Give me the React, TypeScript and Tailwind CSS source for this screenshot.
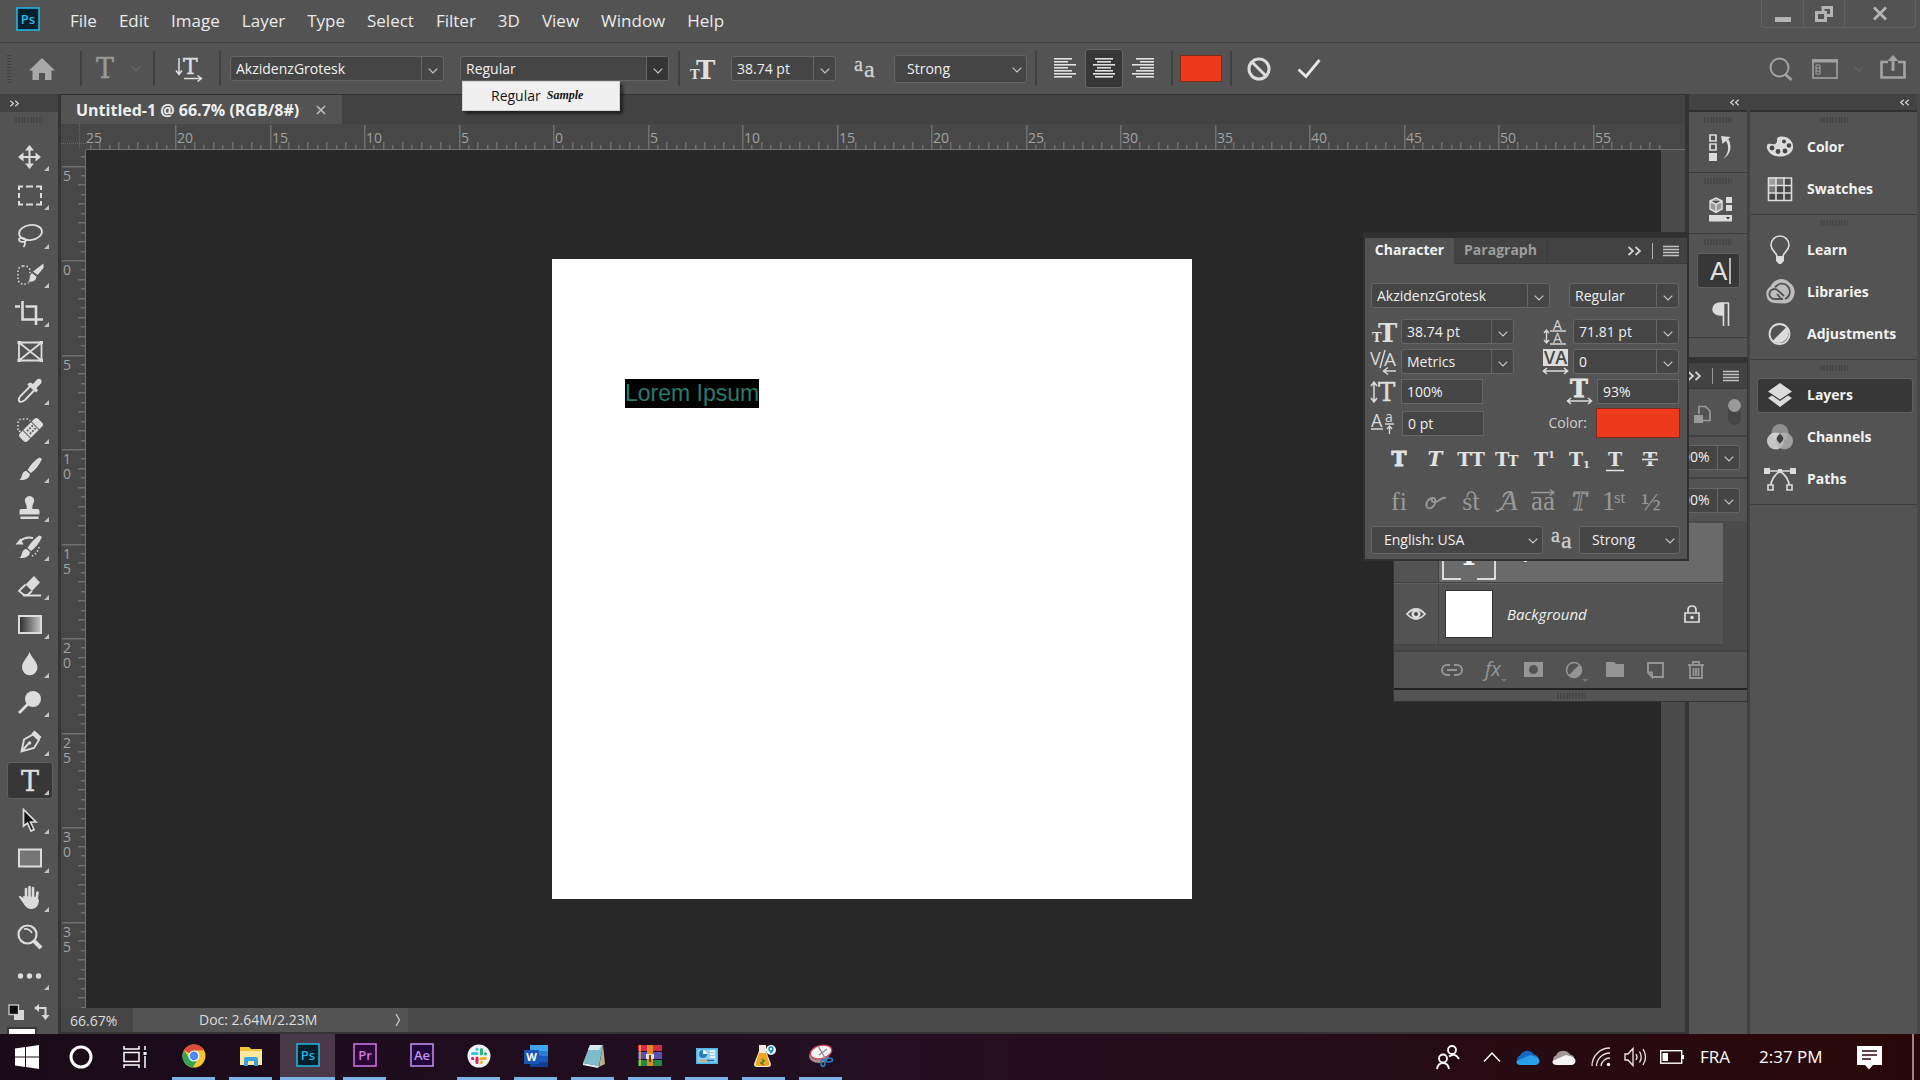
import { useState } from "react";
import type { ReactNode } from "react";

const MENUS = ["File", "Edit", "Image", "Layer", "Type", "Select", "Filter", "3D", "View", "Window", "Help"];

const SERIF = "DejaVu Serif, serif";
const BOOK_SERIF = "Liberation Serif, serif";

// One centimetre on the rulers at 66.7% zoom
const PX_PER_CM = 18.9;

function Svg({ w, h, className, children }: { w: number; h: number; className?: string; children: ReactNode }) {
  return (
    <svg width={w} height={h} viewBox={`0 0 ${w} ${h}`} fill="none" className={`shrink-0 overflow-visible ${className ?? ""}`} aria-hidden="true">
      {children}
    </svg>
  );
}

function Chevron({ className }: { className?: string }) {
  return (
    <Svg w={10} h={6} className={className}>
      <path d="M.7.7 5 5 9.3.7" stroke="currentColor" strokeWidth="1.2" />
    </Svg>
  );
}

function DoubleChevron({ flip, small }: { flip?: boolean; small?: boolean }) {
  return (
    <svg width={small ? 11 : 15} height={small ? 7 : 10} viewBox="0 0 15 10" fill="none" className={flip ? "-scale-x-100" : ""} aria-hidden="true">
      <path d="M1.5 1 6 5 1.5 9M8.5 1 13 5 8.5 9" stroke="#d6d6d6" strokeWidth="1.7" />
    </svg>
  );
}

function Grip() {
  return (
    <Svg w={28} h={6} className="mx-auto">
      <path d="M.5 3H28" stroke="#3c3c3c" strokeWidth="6" strokeDasharray="1 2" />
    </Svg>
  );
}

function Lines() {
  return (
    <Svg w={16} h={12}>
      <path d="M0 1.5H16M0 4.5H16M0 7.5H16M0 10.5H16" stroke="#c2c2c2" strokeWidth="1.3" />
    </Svg>
  );
}

function Separator({ className }: { className?: string }) {
  return <div className={`h-[35px] w-0.5 shrink-0 bg-[#3f3f3f] ${className ?? ""}`} />;
}

/* ---------- Fields ---------- */

function Combo({
  label,
  value,
  className,
  pressed,
}: {
  label: string;
  value: string;
  className?: string;
  pressed?: boolean;
}) {
  return (
    <div className={`flex h-[25px] shrink-0 overflow-hidden rounded-[3px] border border-[#666] bg-[#454545] ${className ?? ""}`}>
      <input aria-label={label} defaultValue={value} className="min-w-0 flex-1 bg-transparent pl-[5px] text-sm leading-5 text-[#efefef] outline-none" />
      <button
        aria-label={`${label} options`}
        className={`flex w-[22px] shrink-0 items-center justify-center border-l border-[#666] pt-1 text-[#c8c8c8] ${pressed ? "bg-[#353535]" : ""}`}
      >
        <Chevron />
      </button>
    </div>
  );
}

function Select({ label, options, className }: { label: string; options: string[]; className?: string }) {
  return (
    <div className={`relative h-7 shrink-0 ${className ?? ""}`}>
      <select
        aria-label={label}
        className="h-full w-full appearance-none rounded-[3px] border border-[#666] bg-[#454545] pl-3 text-sm leading-5 text-[#efefef] outline-none"
      >
        {options.map((o) => (
          <option key={o}>{o}</option>
        ))}
      </select>
      <Chevron className="pointer-events-none absolute top-3 right-[5px] text-[#c8c8c8]" />
    </div>
  );
}

function PlainField({ label, value }: { label: string; value: string }) {
  return (
    <input
      aria-label={label}
      defaultValue={value}
      className="h-[25px] w-[82px] shrink-0 border border-[#666] bg-[#454545] pl-[5px] text-sm leading-5 text-[#efefef] outline-none"
    />
  );
}

/* ---------- Type icons ---------- */

function SizeIcon() {
  return (
    <Svg w={26} h={24}>
      <g fill="#dedede" fontFamily={SERIF} fontWeight="bold">
        <text x="6" y="22" fontSize="26">T</text>
        <text x="0" y="22" fontSize="13">T</text>
      </g>
    </Svg>
  );
}

function AntiAliasIcon() {
  return (
    <Svg w={24} h={24}>
      <g fill="#d0d0d0" stroke="#d0d0d0" strokeWidth=".3" fontFamily={BOOK_SERIF}>
        <text x="0" y="14" fontSize="20">a</text>
        <text x="10" y="20" fontSize="24">a</text>
      </g>
    </Svg>
  );
}

function KerningIcon() {
  return (
    <Svg w={27} h={26}>
      <text x="0" y="16" fontSize="18" fill="#d6d6d6" fontFamily="Open Sans, sans-serif">V</text>
      <text x="14" y="17" fontSize="19" fill="#d6d6d6" fontFamily="Open Sans, sans-serif">A</text>
      <path d="M15 1 10 19M14 22H26M18 18.5 13.5 22l4.5 3.5" stroke="#d6d6d6" strokeWidth="1.5" />
    </Svg>
  );
}

function LeadingIcon() {
  return (
    <Svg w={24} h={26}>
      <g fill="#d6d6d6" fontFamily="Open Sans, sans-serif" fontSize="14">
        <text x="10" y="11">A</text>
        <text x="10" y="24">A</text>
      </g>
      <path d="M7 12H23M7 25H23M3.5 12V23M1 14l2.5-3L6 14M1 21l2.5 3L6 21" stroke="#d6d6d6" strokeWidth="1.4" />
    </Svg>
  );
}

function TrackingIcon() {
  return (
    <Svg w={27} h={27}>
      <rect x="1" y="1" width="25" height="17" fill="#dcdcdc" />
      <text x="2" y="16" fontSize="18" fill="#474747" fontFamily="Open Sans, sans-serif" fontWeight="600">VA</text>
      <path d="M2 23H25M5 20 1.5 23 5 26M22 20l3.5 3L22 26" stroke="#dcdcdc" strokeWidth="1.6" />
    </Svg>
  );
}

function VerticalScaleIcon() {
  return (
    <Svg w={27} h={24}>
      <text x="8" y="21" fontSize="26" fill="#dcdcdc" stroke="#dcdcdc" strokeWidth=".4" fontFamily={SERIF}>T</text>
      <path d="M4 3V21M1 6l3-4 3 4M1 18l3 4 3-4" stroke="#dcdcdc" strokeWidth="1.5" />
    </Svg>
  );
}

function HorizontalScaleIcon() {
  return (
    <Svg w={27} h={26}>
      <text x="4" y="18" fontSize="24" fill="#e2e2e2" fontFamily={SERIF} fontWeight="bold" stroke="#e2e2e2" strokeWidth=".8">T</text>
      <path d="M2 22H25M5 19 1.5 22 5 25M22 19l3.5 3L22 25" stroke="#dcdcdc" strokeWidth="1.5" />
    </Svg>
  );
}

function BaselineIcon() {
  return (
    <Svg w={27} h={24}>
      <text x="1" y="16" fontSize="18" fill="#d6d6d6" fontFamily="Open Sans, sans-serif">A</text>
      <text x="15" y="11" fontSize="14" fill="#d6d6d6" fontFamily="Open Sans, sans-serif">a</text>
      <path d="M1 18H13M15 13H24M19.5 23V15M17 18l2.5-3 2.5 3" stroke="#d6d6d6" strokeWidth="1.4" />
    </Svg>
  );
}

/* ---------- Menu bar ---------- */

function AdobeBadge({ text, color, fill, className }: { text: string; color: string; fill: string; className: string }) {
  return (
    <Svg w={24} h={24} className={className}>
      <rect x="1" y="1" width="22" height="22" fill={fill} stroke={color} strokeWidth="1.5" />
      <text x="12" y="17" textAnchor="middle" fontSize="13" fontWeight="600" fontFamily="Open Sans, sans-serif" fill={color}>
        {text}
      </text>
    </Svg>
  );
}

function MenuBar() {
  return (
    <header className="flex h-[43px] shrink-0 items-start border-b border-[#404040] pl-4">
      <AdobeBadge text="Ps" color="#20bfea" fill="#051e2c" className="mt-[7px]" />
      <nav className="ml-[19px] flex h-[42px] items-center">
        {MENUS.map((m) => (
          <button key={m} className="px-[11px] text-[17px] leading-6 text-[#eaeaea]">
            {m}
          </button>
        ))}
      </nav>
      <div className="mr-1 ml-auto flex h-7 rounded-b-[4px] border border-t-0 border-[#626262] text-[#b4b4b4]">
        <button aria-label="Minimize" className="flex w-[42px] items-center justify-center border-r border-[#626262] pt-1">
          <Svg w={16} h={14}>
            <path d="M0 10.5H16" stroke="currentColor" strokeWidth="5" />
          </Svg>
        </button>
        <button aria-label="Restore" className="flex w-[41px] items-center justify-center border-r border-[#626262]">
          <Svg w={18} h={16}>
            <path d="M8 5V1.5H16.5V9.5H12M1.5 6.5H10.5V14.5H1.5Z" stroke="currentColor" strokeWidth="3" />
          </Svg>
        </button>
        <button aria-label="Close" className="flex w-[70px] items-center justify-center">
          <Svg w={16} h={13}>
            <path d="M2 .5 14 12.5M14 .5 2 12.5" stroke="currentColor" strokeWidth="2.8" />
          </Svg>
        </button>
      </div>
    </header>
  );
}

/* ---------- Options bar ---------- */

function AlignIcon({ align }: { align: "left" | "center" | "right" }) {
  const widths = [18, 14, 22, 14, 18, 22, 18];
  return (
    <Svg w={22} h={21}>
      {widths.map((w, i) => {
        const x = align === "left" ? 0 : align === "center" ? (22 - w) / 2 : 22 - w;
        return <rect key={i} x={x} y={i * 3} width={w} height="1.6" fill="#e2e2e2" />;
      })}
    </Svg>
  );
}

function OptionsBar() {
  const [align, setAlign] = useState<"left" | "center" | "right">("center");

  return (
    <div className="flex h-[51px] shrink-0 items-center pr-[14px] pl-[7px]">
      <Svg w={4} h={28}>
        <path d="M2 0V28" stroke="#3e3e3e" strokeWidth="4" strokeDasharray="1 2" />
      </Svg>
      <button aria-label="Home" className="ml-[18px]">
        <Svg w={26} h={24}>
          <path d="M13 1 26 13.5H22.5V23H16V16H10V23H3.5V13.5H0Z" fill="#a9a9a9" />
        </Svg>
      </button>
      <Separator className="ml-[25px]" />
      <button aria-label="Tool preset" className="ml-3 flex w-[54px] items-center gap-4 text-[#6a6a6a]">
        <Svg w={21} h={26}>
          <text x="2" y="22" fontSize="27" fill="#999" fontFamily={SERIF} stroke="#999" strokeWidth=".4">T</text>
        </Svg>
        <Chevron />
      </button>
      <Separator className="ml-[5px]" />
      <button aria-label="Toggle text orientation" className="ml-5">
        <Svg w={28} h={26}>
          <text x="8" y="18" fontSize="22" fill="#dedede" fontFamily={SERIF} stroke="#dedede" strokeWidth=".4">T</text>
          <path d="M4 2V17M1 14.5 4 18.5 7 14.5M9 22.5H26M22.5 19.5 26.5 22.5 22.5 25.5" stroke="#dedede" strokeWidth="1.5" />
        </Svg>
      </button>
      <Separator className="ml-4" />
      <Combo label="Font family" value="AkzidenzGrotesk" className="ml-[9px] w-[214px]" />
      {/* Style field with its open list */}
      <div className="relative ml-4 w-[209px] shrink-0">
        <Combo label="Font style" value="Regular" pressed />
        <ul role="listbox" aria-label="Font style" className="absolute top-[25px] left-0.5 z-30 h-[30px] w-[158px] border border-[#d0d0d0] bg-[#f0f0f0] shadow-[3px_3px_3px_rgba(0,0,0,0.5)]">
          <li role="option" aria-selected="true" className="flex h-7 items-center gap-1.5 pl-7 text-sm text-[#151515]">
            Regular
            <span className="pb-0.5 font-['Liberation_Serif',serif] text-xs font-semibold italic">Sample</span>
          </li>
        </ul>
      </div>
      <Separator className="ml-[9px]" />
      <div className="ml-[10px]">
        <SizeIcon />
      </div>
      <Combo label="Font size" value="38.74 pt" className="ml-[15px] w-[105px]" />
      <div className="ml-[18px]">
        <AntiAliasIcon />
      </div>
      <Select label="Anti-aliasing" options={["Strong"]} className="ml-4 w-[133px]" />
      <Separator className="ml-2" />
      <div className="ml-[9px] flex gap-px">
        {(["left", "center", "right"] as const).map((a) => (
          <button
            key={a}
            aria-label={`Align ${a}`}
            aria-pressed={a === align}
            onClick={() => setAlign(a)}
            className={`flex h-[39px] w-[38px] items-center justify-center rounded-[3px] border ${a === align ? "border-[#666] bg-[#373737]" : "border-transparent"}`}
          >
            <AlignIcon align={a} />
          </button>
        ))}
      </div>
      <Separator className="ml-[9px]" />
      <button aria-label="Text color" className="ml-[7px] h-[27px] w-[42px] shrink-0 border border-[#7c2a1c] bg-[#ee391d]" />
      <Separator className="ml-2" />
      <button aria-label="Cancel edits" className="ml-[15px]">
        <Svg w={24} h={24}>
          <circle cx="12" cy="12" r="10" stroke="#dcdcdc" strokeWidth="3" />
          <path d="M5 5 19 19" stroke="#dcdcdc" strokeWidth="3" />
        </Svg>
      </button>
      <button aria-label="Commit edits" className="ml-[26px]">
        <Svg w={24} h={22}>
          <path d="M1.5 11.5 9 18.5 22.5 2" stroke="#e8e8e8" strokeWidth="2.8" />
        </Svg>
      </button>

      <div className="ml-auto flex items-center text-[#a3a3a3]">
        <button aria-label="Search">
          <Svg w={24} h={24}>
            <circle cx="10.5" cy="10.5" r="9" stroke="currentColor" strokeWidth="2" />
            <path d="M16 17 22.5 23" stroke="currentColor" strokeWidth="3" />
          </Svg>
        </button>
        <button aria-label="Workspace" className="ml-[19px] flex items-center gap-4">
          <Svg w={26} h={20}>
            <path d="M0 2H26" stroke="currentColor" strokeWidth="3" />
            <rect x="1" y="1" width="24" height="18" stroke="currentColor" strokeWidth="1.6" />
            <path d="M4 6H8V15H4ZM4 9H8M4 12H8" stroke="currentColor" />
          </Svg>
          <Chevron className="text-[#686868]" />
        </button>
        <button aria-label="Share" className="ml-4 pb-1">
          <Svg w={26} h={24}>
            <path d="M8 7H1.5V22.5H24.5V7H18" stroke="currentColor" strokeWidth="2.6" />
            <path d="M13 16V4" stroke="currentColor" strokeWidth="3" />
            <path d="M7.5 6 13 0 18.5 6Z" fill="currentColor" />
          </Svg>
        </button>
      </div>
    </div>
  );
}

/* ---------- Tool bar ---------- */

const BRUSH = "M24.5 3.5 27 5C24.5 11 20 16 16 19L12.5 16C15.5 11 20 6 24.5 3.5ZM11.5 17 15 20C14.5 24.5 10 26.5 4.5 26 7 24 6.5 21 8 19 9 17.5 10 17 11.5 17Z";

const TOOLS: { name: string; icon: ReactNode; flyout?: boolean }[] = [
  {
    name: "Move",
    icon: (
      <>
        <path d="M14.5 6V24M5 15H24" stroke="#dcdcdc" strokeWidth="2" />
        <path d="M14.5 3 19 8.5H10ZM14.5 27 19 21.5H10ZM3 15 8.5 10.5V19.5ZM26 15 20.5 10.5V19.5Z" fill="#dcdcdc" />
      </>
    ),
  },
  {
    name: "Marquee",
    icon: <path d="M4 9V5.5H8M11 5.5H18M21 5.5H26V9M26 12V17M26 20V23.5H21M18 23.5H11M8 23.5H4V20M4 17V12" stroke="#dcdcdc" strokeWidth="2" />,
  },
  {
    name: "Lasso",
    icon: (
      <g stroke="#dcdcdc" strokeWidth="1.8">
        <ellipse cx="15.5" cy="12.5" rx="11.5" ry="7.5" transform="rotate(-8 15.5 12.5)" />
        <path d="M4 19C5 17 10 18 11 20 11 22 5 23 4 20ZM9 21C11 23 10 25 8.5 27" />
      </g>
    ),
  },
  {
    name: "Quick Selection",
    icon: (
      <>
        <rect x="3" y="7" width="12" height="18" rx="5" stroke="#dcdcdc" strokeWidth="1.5" strokeDasharray="1.5 2" />
        <path d="M28.5 4.5V9L22.5 16 18 12.5Z" fill="#dcdcdc" />
        <path d="M17 13.5 22 17.5C22 22 17 24 12.5 23 15 21 13.5 15.5 17 13.5Z" fill="#dcdcdc" stroke="#535353" />
      </>
    ),
  },
  { name: "Crop", icon: <path d="M0 8.5H5M7.5 3V21.5H28M10.5 8.5H21V27" stroke="#dcdcdc" strokeWidth="2.6" /> },
  {
    name: "Frame",
    flyout: false,
    icon: (
      <>
        <path d="M4 5.5H26.5V23.5H4ZM4 5.5 26.5 23.5M26.5 5.5 4 23.5" stroke="#dcdcdc" strokeWidth="1.8" />
        <path d="M2.5 4H6V7H2.5ZM24.5 4H28V7H24.5ZM2.5 22H6V25H2.5ZM24.5 22H28V25H24.5Z" fill="#dcdcdc" />
      </>
    ),
  },
  {
    name: "Eyedropper",
    icon: (
      <>
        <path d="M15 10.5 5.5 20C4 22 3 24 4.5 25.5 6 26.5 8 25.5 10 24L19 14.5" stroke="#dcdcdc" strokeWidth="1.9" />
        <path d="M13 7.5 15.5 6.5 18 8 22 3.5C25 1.5 28 4.5 26 7.5L21.5 12 23 14.5 21 16.5 12.5 9Z" fill="#dcdcdc" />
      </>
    ),
  },
  {
    name: "Healing Brush",
    icon: (
      <>
        <path d="M3 15V8Q3 4 8 4H12Q14 4 15 6M4 16Q6 17 8 16" stroke="#dcdcdc" strokeWidth="1.5" strokeDasharray="1.5 2" />
        <g transform="rotate(-45 16 15)">
          <rect x="3" y="9.5" width="26" height="11" rx="3" fill="#dcdcdc" />
          <path d="M10 9V21M22 9V21" stroke="#535353" />
          <path d="M12.5 13H21M12.5 17H21" stroke="#535353" strokeWidth="1.7" strokeDasharray="1.7 1.5" />
        </g>
      </>
    ),
  },
  { name: "Brush", icon: <path d={BRUSH} fill="#dcdcdc" /> },
  {
    name: "Clone Stamp",
    icon: (
      <path d="M14.5 3A4.7 4.7 0 0 1 18.5 10C17.5 12 17 14 17.5 16H22.5Q24.5 16 24.5 18V21.5H4.5V18Q4.5 16 6.5 16H11.5C12 14 11.5 12 10.5 10A4.7 4.7 0 0 1 14.5 3ZM5.5 23.5H23.5V26H5.5Z" fill="#dcdcdc" />
    ),
  },
  {
    name: "History Brush",
    icon: (
      <>
        <path d={BRUSH} fill="#dcdcdc" />
        <path d="M.5 12.5 5.5 6.5 8.5 12.5Z" fill="#dcdcdc" />
        <path d="M5 9Q11 4 18 6" stroke="#dcdcdc" strokeWidth="2" />
        <path d="M24 15Q23 21 17 24" stroke="#dcdcdc" strokeWidth="1.5" strokeDasharray="1.5 2" />
      </>
    ),
  },
  {
    name: "Eraser",
    icon: (
      <>
        <path d="M19 5 25 11.5 17 20 10.5 13.5Z" fill="#dcdcdc" />
        <path d="M10.5 13.5 4 20 9 24H12.5L17 20M8 24.5H26" stroke="#dcdcdc" strokeWidth="1.8" />
      </>
    ),
  },
  {
    name: "Gradient",
    icon: (
      <>
        <defs>
          <linearGradient id="tool-gradient">
            <stop offset="0" stopColor="#2a2a2a" />
            <stop offset="1" stopColor="#c8c8c8" />
          </linearGradient>
        </defs>
        <rect x="4" y="6" width="22" height="17" fill="url(#tool-gradient)" stroke="#dcdcdc" strokeWidth="2" />
      </>
    ),
  },
  { name: "Blur", icon: <path d="M14.5 3C16 8 22.5 12.5 22.5 18.5A7.7 7.7 0 0 1 7 18.5C7 12.5 13 8 14.5 3Z" fill="#dcdcdc" /> },
  {
    name: "Dodge",
    icon: (
      <>
        <circle cx="18" cy="11" r="8" fill="#dcdcdc" />
        <path d="M13 16 4 25" stroke="#dcdcdc" strokeWidth="2.8" />
      </>
    ),
  },
  {
    name: "Pen",
    icon: (
      <>
        <path d="M18 7.5 24 13 19 21 6.5 24.5 9 12.5ZM6.5 24.5 13.5 16.5" stroke="#dcdcdc" strokeWidth="1.9" />
        <circle cx="14.5" cy="16" r="1.8" fill="#dcdcdc" />
        <path d="M19.5 3.5 26.5 10 24 13 16.5 6.5Z" fill="#dcdcdc" />
      </>
    ),
  },
  {
    name: "Type",
    icon: (
      <text x="15" y="25" textAnchor="middle" fontSize="27" fill="#dedede" stroke="#dedede" strokeWidth=".4" fontFamily={SERIF}>
        T
      </text>
    ),
  },
  {
    name: "Path Selection",
    icon: <path d="M8.5 4.5V21L12.5 18 16 26 19 24.5 15.5 17H21Z" fill="#151515" stroke="#dcdcdc" strokeWidth="1.7" />,
  },
  { name: "Rectangle", icon: <rect x="4" y="5.5" width="22" height="17" fill="#757575" stroke="#dcdcdc" strokeWidth="2" /> },
  {
    name: "Hand",
    icon: (
      <>
        <path d="M8 13 9.5 22H21L23 14" fill="#dcdcdc" />
        <path d="M11 16V6M14.5 15V4M18 15V5M21.5 17 22.5 9.5" stroke="#dcdcdc" strokeWidth="2.6" strokeLinecap="round" />
        <path d="M3.5 13.5C6 11.5 7.5 15 10 16.5H24C24 21.5 21.5 26 16.5 26 10 26 9 20 3.5 13.5Z" fill="#dcdcdc" />
      </>
    ),
  },
  {
    name: "Zoom",
    flyout: false,
    icon: (
      <>
        <circle cx="12.5" cy="12.5" r="9" stroke="#dcdcdc" strokeWidth="2.2" />
        <path d="M9 7Q14 6 17 11" stroke="#dcdcdc" strokeWidth="1.6" />
        <path d="M18.5 18.5 26 26" stroke="#dcdcdc" strokeWidth="4" />
      </>
    ),
  },
  {
    name: "More tools",
    icon: (
      <g fill="#dcdcdc">
        <circle cx="5.5" cy="15" r="2.7" />
        <circle cx="14.5" cy="15" r="2.7" />
        <circle cx="23.5" cy="15" r="2.7" />
      </g>
    ),
  },
];

function ToolBar() {
  const [active, setActive] = useState("Type");

  return (
    <aside className="w-[61px] shrink-0 overflow-hidden border-r-[3px] border-[#353535]">
      <div className="flex h-[18px] items-center bg-[#424242] pl-[9px]">
        <DoubleChevron small />
      </div>
      <div className="h-[25px] pt-[5px]">
        <Grip />
      </div>
      {TOOLS.map((t) => (
        <div key={t.name} className="flex h-[39px] items-center pl-[7px]">
          <button
            aria-label={t.name}
            aria-pressed={t.name === active}
            onClick={() => setActive(t.name)}
            className={`relative flex h-[37px] w-[46px] items-center justify-center rounded-[3px] border ${t.name === active ? "border-[#5f5f5f] bg-[#373737]" : "border-transparent"}`}
          >
            <Svg w={30} h={30}>{t.icon}</Svg>
            {t.flyout !== false && (
              <Svg w={5} h={5} className="absolute right-[3px] bottom-[3px]">
                <path d="M5 0V5H0Z" fill="#c4c4c4" />
              </Svg>
            )}
          </button>
        </div>
      ))}
      <div className="mt-[9px] flex items-start gap-2.5 pl-2">
        <button aria-label="Default colors">
          <Svg w={16} h={17}>
            <rect x="6" y="6" width="10" height="10" fill="#d8d8d8" />
            <rect x="1" y="1" width="9.5" height="9.5" fill="#0c0c0c" stroke="#cfcfcf" strokeWidth="1.3" />
          </Svg>
        </button>
        <button aria-label="Swap colors">
          <Svg w={16} h={16}>
            <path d="M3 4H11.5V12" stroke="#d8d8d8" strokeWidth="2" />
            <path d="M0 4 5 0V8ZM7.5 11H15.5L11.5 16Z" fill="#d8d8d8" />
          </Svg>
        </button>
      </div>
      <button aria-label="Foreground color" className="mt-1.5 ml-[7px] block h-[30px] w-[30px] border-2 border-[#383838] bg-white" />
    </aside>
  );
}

/* ---------- Document ---------- */

function rulerTicks(origin: number, length: number) {
  const ticks: { pos: number; half: number }[] = [];
  const first = -Math.floor((origin / PX_PER_CM) * 2);
  for (let half = first; origin + (half * PX_PER_CM) / 2 < length; half++) {
    ticks.push({ pos: Math.round(origin + (half * PX_PER_CM) / 2), half });
  }
  return ticks;
}

function HorizontalRuler() {
  return (
    <div className="flex h-[26px] shrink-0 overflow-hidden bg-[#474747]">
      <Svg w={25} h={26}>
        <path d="M0 19.5H25M18.5 0V26" stroke="#6a6a6a" strokeDasharray="1 1" />
      </Svg>
      <svg height="26" className="min-w-0 flex-1 border-b border-[#707070]" aria-hidden="true">
        {rulerTicks(467, 1577).map(({ pos, half }) => {
          const major = half % 10 === 0;
          return (
            <g key={half}>
              <rect x={pos} y={major ? 1 : half % 2 === 0 ? 18 : 21} width="1.5" height="26" fill="#707070" />
              {major && (
                <text x={pos + 2} y="19" fontSize="14" fill="#a2a2a2">
                  {Math.abs(half / 2)}
                </text>
              )}
            </g>
          );
        })}
        <text x="0" y="19" fontSize="14" fill="#a2a2a2">25</text>
      </svg>
    </div>
  );
}

function VerticalRuler() {
  return (
    <svg width="25" className="h-full shrink-0 border-r border-[#707070] bg-[#474747]" aria-hidden="true">
      {rulerTicks(110, 858).map(({ pos, half }) => {
        const major = half % 10 === 0;
        const digits = String(Math.abs(half / 2)).split("");
        return (
          <g key={half}>
            <rect x={major ? 1 : half % 2 === 0 ? 17 : 20} y={pos} width="26" height="1.5" fill="#707070" />
            {major &&
              digits.map((d, i) => (
                <text key={i} x="2" y={pos + 15 + i * 15} fontSize="14" fill="#a2a2a2">
                  {d}
                </text>
              ))}
          </g>
        );
      })}
    </svg>
  );
}

function DocumentWindow() {
  return (
    <main className="flex min-w-0 flex-1 flex-col overflow-hidden border-r-4 border-[#343434]">
      <div className="flex h-[30px] shrink-0 border-t border-[#303030] bg-[#424242]">
        <div className="flex w-[281px] items-center gap-[17px] bg-[#535353] pl-[15px]">
          <span className="text-base leading-5 font-bold whitespace-nowrap text-[#efefef]">Untitled-1 @ 66.7% (RGB/8#)</span>
          <button aria-label="Close document">
            <Svg w={10} h={10}>
              <path d="M1 1 9 9M9 1 1 9" stroke="#bdbdbd" strokeWidth="1.7" />
            </Svg>
          </button>
        </div>
      </div>
      <HorizontalRuler />
      <div className="flex min-h-0 flex-1">
        <VerticalRuler />
        <div className="flex min-w-0 flex-1 items-center justify-center bg-[#282828] pr-[3px]">
          <div className="relative h-[640px] w-[640px] shrink-0 bg-white">
            <span className="absolute top-[120px] left-[73px] bg-black font-['Liberation_Sans',sans-serif] text-[23px] leading-[29px] whitespace-nowrap text-[#2a7a6c]">
              Lorem Ipsum
            </span>
          </div>
        </div>
        <div className="w-6 shrink-0 bg-[#4a4a4a]" />
      </div>
      <footer className="flex h-[26px] shrink-0 items-stretch border-b-2 border-[#333] bg-[#4a4a4a] text-sm leading-[26px] text-[#dcdcdc]">
        <div className="w-[72px] bg-[#454545] pl-[9px]">66.67%</div>
        <button className="flex w-[275px] items-center bg-[#535353] pl-[66px]">
          Doc: 2.64M/2.23M
          <Svg w={6} h={14} className="mr-[7px] ml-auto">
            <path d="M1 1 4.5 7 1 13" stroke="#c8c8c8" strokeWidth="1.3" />
          </Svg>
        </button>
      </footer>
    </main>
  );
}

/* ---------- Docks ---------- */

function DockHeader() {
  return (
    <div className="flex h-[18px] items-center justify-end border-b-2 border-[#303030] bg-[#424242] pr-[7px]">
      <DoubleChevron small flip />
    </div>
  );
}

function IconDock() {
  return (
    <aside className="w-[61px] shrink-0 border-r-[3px] border-[#414141]">
      <DockHeader />
      <div className="flex h-[61px] flex-col border-b border-[#3c3c3c] pt-[5px]">
        <Grip />
        <button aria-label="History" className="mt-2.5 ml-[19px]">
          <Svg w={25} h={28}>
            <path d="M2 2H8V8H2ZM2 11H8V17H2Z" stroke="#dcdcdc" strokeWidth="1.7" />
            <rect x="1" y="20" width="8" height="8" fill="#dcdcdc" />
            <path d="M13 3 22.5 4 14.5 11ZM18 8C22 14 20 22 15 25.5 21.5 23 25 15 20.5 6Z" fill="#dcdcdc" />
          </Svg>
        </button>
      </div>
      <div className="flex h-[61px] flex-col border-b border-[#3c3c3c] pt-[5px]">
        <Grip />
        <button aria-label="Properties" className="mt-3 ml-[19px]">
          <Svg w={25} h={27}>
            <path d="M8 2 14 5V13L8 16.5 2 13V5ZM2 5 8 8.5 14 5M8 8.5V16" stroke="#dcdcdc" strokeWidth="1.5" fill="#9a9a9a" />
            <path d="M18 1H24V7H18ZM18 9H24V15H18ZM1 19H24V25.5H1Z" fill="#dcdcdc" />
            <path d="M18 21H22L20 23.5Z" fill="#333" />
          </Svg>
        </button>
      </div>
      <div className="flex h-[104px] flex-col border-b border-[#3c3c3c] pt-[5px]">
        <Grip />
        <button aria-label="Character" className="mt-2 ml-2 flex h-[35px] w-[43px] items-center justify-center rounded-[3px] border border-[#5f5f5f] bg-[#373737]">
          <Svg w={24} h={26}>
            <text x="3" y="22" fontSize="26" fill="#e2e2e2" fontFamily="Liberation Sans, sans-serif">A</text>
            <path d="M23 0V26" stroke="#e2e2e2" strokeWidth="1.5" />
          </Svg>
        </button>
        <button aria-label="Paragraph" className="mt-3.5 ml-[23px]">
          <Svg w={18} h={24}>
            <path d="M17 1H8A7 6 0 0 0 8 13H10V1M11.5 1V24M16.5 1V24" stroke="#dcdcdc" strokeWidth="1.6" />
            <path d="M8 1A7 6 0 0 0 8 13H11V1Z" fill="#dcdcdc" />
          </Svg>
        </button>
      </div>
    </aside>
  );
}

const PANEL_GROUPS: { name: string; icon: ReactNode }[][] = [
  [
    {
      name: "Color",
      icon: (
        <>
          <path d="M3 17C2 10 8 14 11 13 15 11 11 7 15 6 23 4 30 10 29 17 28 23 21 26 15 25.5 9 25 4 22 3 17Z" fill="#dcdcdc" />
          <g fill="#474747">
            <circle cx="8" cy="17" r="2.4" />
            <circle cx="14" cy="20.5" r="2.4" />
            <circle cx="21" cy="20" r="2.4" />
            <circle cx="25" cy="14.5" r="2.3" />
            <circle cx="20" cy="10.5" r="2" />
          </g>
        </>
      ),
    },
    {
      name: "Swatches",
      icon: (
        <>
          <path d="M4 4H28V28H4Z" fill="#444" />
          <path d="M4 4H12V12H4Z" fill="#a0a0a0" />
          <path d="M12 4H20V12H12ZM4 12H12V20H4Z" fill="#777" />
          <path d="M4.5 5H27.5V27.5H4.5ZM12 4V28M20 4V28M4 12.5H28M4 20H28" stroke="#dcdcdc" strokeWidth="1.6" />
        </>
      ),
    },
  ],
  [
    {
      name: "Learn",
      icon: (
        <>
          <path d="M13 23C13 18 7 17 7 11A9 9 0 0 1 25 11C25 17 19 18 19 23Z" stroke="#dcdcdc" strokeWidth="1.6" />
          <path d="M12 22H20V27L17 30H15L12 27Z" fill="#dcdcdc" />
        </>
      ),
    },
    {
      name: "Libraries",
      icon: (
        <>
          <path d="M10 27A9 9 0 0 1 6.5 10.5 11.5 11.5 0 0 1 26 7 11.5 11.5 0 0 1 21 27.5Z" fill="#bdbdbd" />
          <g stroke="#535353" strokeWidth="1.8">
            <path d="M19 23H10A5 5 0 1 1 14 14.5L20 20" />
            <path d="M11 11.5A8 8 0 1 1 21 23" />
            <path d="M13 18 17 22.5" />
          </g>
        </>
      ),
    },
    {
      name: "Adjustments",
      icon: (
        <>
          <circle cx="15.5" cy="16" r="10" stroke="#dcdcdc" strokeWidth="1.8" />
          <path d="M22.5 9A10 10 0 0 1 8.5 23Z" fill="#dcdcdc" />
        </>
      ),
    },
  ],
  [
    {
      name: "Layers",
      icon: (
        <>
          <path d="M16 4 28 12.5 16 20.5 4 12.5Z" fill="#dcdcdc" />
          <path d="M4 19 8 16.5 16 22 24 16.5 28 19 16 28Z" fill="#dcdcdc" />
        </>
      ),
    },
    {
      name: "Channels",
      icon: (
        <>
          <circle cx="16" cy="11.5" r="8.5" fill="#8e8e8e" />
          <circle cx="11.5" cy="20" r="8.5" fill="#dcdcdc" fillOpacity=".85" />
          <circle cx="20.5" cy="20" r="8.5" fill="#b4b4b4" fillOpacity=".8" />
          <path d="M16 12.8A8.5 8.5 0 0 1 19.5 17.8 8.5 8.5 0 0 1 16 22.5 8.5 8.5 0 0 1 12.5 17.8 8.5 8.5 0 0 1 16 12.8Z" fill="#3e3e3e" />
        </>
      ),
    },
    {
      name: "Paths",
      icon: (
        <>
          <path d="M2 8H30M6.5 24C7 16 11 12 16 8 21 12 25 16 25.5 24" stroke="#dcdcdc" strokeWidth="1.7" />
          <path d="M0 5H6V11H0ZM26 5H32V11H26ZM14 6H18V10H14Z" fill="#dcdcdc" />
          <path d="M4 22H9V27H4ZM23 22H28V27H23Z" fill="#535353" stroke="#dcdcdc" strokeWidth="1.6" />
        </>
      ),
    },
  ],
];

function PanelDock() {
  const [open, setOpen] = useState("Layers");

  return (
    <aside className="w-[170px] shrink-0 border-r-[3px] border-[#484848]">
      <DockHeader />
      {PANEL_GROUPS.map((group, i) => (
        <div key={i} className="border-b border-[#3c3c3c] pb-[5px] not-first-of-type:pb-1">
          <div className="h-[14px] pt-[5px]">
            <Grip />
          </div>
          {group.map((p) => (
            <div key={p.name} className="flex h-[42px] items-center pr-1 pl-[7px]">
              <button
                aria-pressed={p.name === open}
                onClick={() => setOpen(p.name)}
                className={`flex h-[35px] w-full items-center gap-[11px] rounded-[3px] border pl-1.5 text-sm leading-5 font-bold text-[#f2f2f2] ${p.name === open ? "border-[#5f5f5f] bg-[#373737]" : "border-transparent"}`}
              >
                <Svg w={32} h={32}>{p.icon}</Svg>
                {p.name}
              </button>
            </div>
          ))}
        </div>
      ))}
    </aside>
  );
}

/* ---------- Layers panel ---------- */

function EyeIcon() {
  return (
    <Svg w={20} h={14}>
      <path d="M1 7Q10-3 19 7 10 17 1 7Z" stroke="#dcdcdc" strokeWidth="1.8" />
      <circle cx="10" cy="7" r="4.5" fill="#dcdcdc" />
      <circle cx="10" cy="7" r="2" fill="#444" />
    </Svg>
  );
}

const LAYER_ACTIONS: { name: string; icon: ReactNode }[] = [
  {
    name: "Link layers",
    icon: <path d="M10 7H7A5 5 0 0 0 7 17H10M14 7H17A5 5 0 0 1 17 17H14M7 12H17" stroke="#959595" strokeWidth="2" />,
  },
  {
    name: "Layer effects",
    icon: (
      <>
        <text x="4" y="18" fontSize="20" fontStyle="italic" fill="#959595">fx</text>
        <path d="M20 21H26L23 24Z" fill="#777" />
      </>
    ),
  },
  {
    name: "Add mask",
    icon: <path d="M3 4H22V19H3ZM12.5 7A4.5 4.5 0 1 0 12.5 16 4.5 4.5 0 1 0 12.5 7Z" fill="#959595" fillRule="evenodd" />,
  },
  {
    name: "Adjustment layer",
    icon: (
      <>
        <circle cx="12" cy="12" r="7.5" stroke="#959595" strokeWidth="1.6" />
        <path d="M17.5 6.5A7.5 7.5 0 0 1 6.5 17.5Z" fill="#959595" />
        <path d="M20 21H26L23 24Z" fill="#777" />
      </>
    ),
  },
  { name: "New group", icon: <path d="M3 4H11L13 6H21V19H3Z" fill="#959595" /> },
  { name: "New layer", icon: <path d="M9 19H20V5H5V14.5L9 19V14.5H5" stroke="#959595" strokeWidth="1.9" /> },
  {
    name: "Delete layer",
    icon: <path d="M4 7H20M9 6V4H15V6M6 8V20H18V8M9.5 10V18M12 10V18M14.5 10V18" stroke="#959595" strokeWidth="1.8" />,
  },
];

function LayersPanel() {
  return (
    <section aria-label="Layers" className="absolute top-[263px] right-[172px] z-10 w-[355px] border-x border-t-[6px] border-b border-[#333] bg-[#535353]">
      <div className="flex h-[26px] items-center justify-end gap-[10px] border-b border-[#3c3c3c] bg-[#424242] pr-2">
        <DoubleChevron />
        <div className="h-4 w-px bg-[#9a9a9a]" />
        <Lines />
      </div>
      <div className="flex h-12 items-center justify-end gap-4 border-b-2 border-[#424242] pr-1.5">
        <Svg w={18} h={20} className="mt-1.5">
          <path d="M5 9V1.5H11.5L16 6V15.5H9" stroke="#9a9a9a" strokeWidth="1.7" />
          <rect x="0" y="10" width="9" height="8" fill="#9a9a9a" />
        </Svg>
        <div className="h-[26px] w-[13px] rounded-full bg-[#454545]">
          <div className="size-[13px] rounded-full bg-[#9a9a9a]" />
        </div>
      </div>
      <div className="flex h-[42px] items-center justify-end border-b-2 border-[#424242] pr-[7px]">
        <Combo label="Opacity" value="100%" className="w-[72px]" />
      </div>
      <div className="flex h-[42px] items-center justify-end pr-[7px]">
        <Combo label="Fill" value="100%" className="w-[72px]" />
      </div>
      <div className="bg-[#4a4a4a] pt-0.5 pr-6">
        <div className="flex h-[60px] border-b border-[#404040] bg-[#6a6a6a]">
          <button aria-label="Toggle text layer visibility" className="flex w-[45px] items-center justify-center border-r border-[#404040] bg-[#535353]">
            <EyeIcon />
          </button>
          <Svg w={54} h={54} className="mt-[3px] ml-[3px]">
            <path d="M19 1H1V53H19M35 53H53V1H35" stroke="#fff" strokeWidth="1.5" />
            <text x="27" y="39" textAnchor="middle" fontSize="28" fontWeight="bold" fill="#efefef" fontFamily={SERIF}>T</text>
          </Svg>
          <span className="mt-5 ml-[13px] text-sm leading-5 text-white">Layer 1</span>
        </div>
        <div className="flex h-[62px] items-center border-t border-b border-t-[#606060] border-b-[#444] bg-[#535353]">
          <button aria-label="Toggle Background visibility" className="flex h-full w-[45px] items-center justify-center border-r border-[#404040]">
            <EyeIcon />
          </button>
          <div className="ml-[6px] size-12 border border-[#333] bg-white" />
          <span className="ml-[14px] text-[15px] leading-5 text-[#efefef] italic">Background</span>
          <Svg w={16} h={18} className="mr-[23px] ml-auto">
            <path d="M1 8H15V17H1ZM4 8V5Q4 1 8 1T12 5V8" stroke="#dcdcdc" strokeWidth="1.7" />
            <circle cx="8" cy="12.5" r="1.8" fill="#dcdcdc" />
          </Svg>
        </div>
        <div className="h-[5px]" />
      </div>
      <div className="flex h-[40px] items-center justify-between border-t-2 border-b-2 border-t-[#424242] border-b-[#222] pr-[38px] pl-[46px]">
        {LAYER_ACTIONS.map((a) => (
          <button key={a.name} aria-label={a.name}>
            <Svg w={25} h={24}>{a.icon}</Svg>
          </button>
        ))}
      </div>
      <div className="h-[11px] pt-[3px]">
        <Grip />
      </div>
    </section>
  );
}

/* ---------- Character panel ---------- */

function StyleGlyph({ children }: { children: ReactNode }) {
  return <Svg w={28} h={28}>{children}</Svg>;
}

const TYPE_STYLES: { name: string; icon: ReactNode }[] = [
  { name: "Faux bold", icon: <text x="14" y="20" textAnchor="middle" fontSize="20" fontWeight="bold" stroke="#e2e2e2">T</text> },
  { name: "Faux italic", icon: <text x="14" y="20" textAnchor="middle" fontSize="20" fontWeight="bold" fontStyle="italic">T</text> },
  { name: "All caps", icon: <text x="14" y="20" textAnchor="middle" fontSize="19" fontWeight="600">TT</text> },
  {
    name: "Small caps",
    icon: (
      <>
        <text x="2" y="20" fontSize="19" fontWeight="600">T</text>
        <text x="15" y="20" fontSize="14" fontWeight="600">T</text>
      </>
    ),
  },
  {
    name: "Superscript",
    icon: (
      <>
        <text x="6" y="20" fontSize="19" fontWeight="600">T</text>
        <text x="20" y="12" fontSize="10" fontWeight="600">1</text>
      </>
    ),
  },
  {
    name: "Subscript",
    icon: (
      <>
        <text x="5" y="20" fontSize="19" fontWeight="600">T</text>
        <text x="19" y="22" fontSize="10" fontWeight="600">1</text>
      </>
    ),
  },
  {
    name: "Underline",
    icon: (
      <>
        <text x="15" y="20" textAnchor="middle" fontSize="19" fontWeight="600">T</text>
        <path d="M6 24.5H24" stroke="#e2e2e2" strokeWidth="1.5" />
      </>
    ),
  },
  {
    name: "Strikethrough",
    icon: (
      <>
        <text x="14" y="20" textAnchor="middle" fontSize="19" fontWeight="600">T</text>
        <path d="M6 13.5H22" stroke="#535353" strokeWidth="3.5" />
        <path d="M6 13.5H22" stroke="#e2e2e2" strokeWidth="1.6" />
      </>
    ),
  },
];

const OPEN_TYPE: { name: string; icon: ReactNode }[] = [
  { name: "Standard ligatures", icon: <text x="14" y="22" textAnchor="middle" fontSize="26">fi</text> },
  {
    name: "Contextual alternates",
    icon: (
      <path d="M12 10C7 10 4 16 6 19 9 23 16 17 14 11 12 8 9 12 12 14 17 16 20 8 25 10" fill="none" stroke="#999" strokeWidth="1.8" />
    ),
  },
  {
    name: "Discretionary ligatures",
    icon: (
      <>
        <text x="14" y="22" textAnchor="middle" fontSize="26">st</text>
        <path d="M10 9Q11 3 15 4T18 10" fill="none" stroke="#999" strokeWidth="1.4" />
      </>
    ),
  },
  {
    name: "Swash",
    icon: (
      <>
        <text x="16" y="22" textAnchor="middle" fontSize="28" fontStyle="italic">A</text>
        <path d="M8 20Q5 25 3 22M19 4Q12 3 10 9" fill="none" stroke="#999" strokeWidth="1.6" />
      </>
    ),
  },
  {
    name: "Stylistic alternates",
    icon: (
      <>
        <text x="15" y="22" textAnchor="middle" fontSize="27">aa</text>
        <path d="M3 4.5H25M22 1.5 26 4.5 22 7.5" fill="none" stroke="#999" strokeWidth="1.4" />
      </>
    ),
  },
  {
    name: "Titling alternates",
    icon: (
      <text x="15" y="22" textAnchor="middle" fontSize="27" fontStyle="italic" fill="none" stroke="#999">T</text>
    ),
  },
  {
    name: "Ordinals",
    icon: (
      <>
        <text x="2" y="22" fontSize="27">1</text>
        <text x="14" y="15" fontSize="17">st</text>
      </>
    ),
  },
  { name: "Fractions", icon: <text x="15" y="22" textAnchor="middle" fontSize="26">½</text> },
];

function CharacterPanel() {
  return (
    <section aria-label="Character" className="absolute top-[138px] right-[231px] z-20 h-[329px] w-[326px] border-x-2 border-t-[6px] border-b-2 border-[#303030] bg-[#535353]">
      <div className="flex h-[26px] items-stretch bg-[#424242] text-sm leading-5 font-bold">
        <button className="w-[89px] bg-[#535353] pb-0.5 text-[#f2f2f2]">Character</button>
        <button className="w-[94px] border-r border-b border-[#3a3a3a] pb-0.5 text-[#9d9d9d]">Paragraph</button>
        <div className="flex flex-1 items-center justify-end gap-[10px] border-b border-[#3a3a3a] pr-2">
          <DoubleChevron />
          <div className="h-4 w-px bg-[#b0b0b0]" />
          <Lines />
        </div>
      </div>

      <div className="flex justify-between pt-[19px] pr-2 pl-1.5">
        <Combo label="Font family" value="AkzidenzGrotesk" className="w-[179px]" />
        <Combo label="Font style" value="Regular" className="w-[110px]" />
      </div>

      <div className="mt-[11px] flex h-[25px] items-center pr-2 pl-[7px]">
        <SizeIcon />
        <Combo label="Font size" value="38.74 pt" className="ml-[3px] w-[113px]" />
        <div className="ml-auto">
          <LeadingIcon />
        </div>
        <Combo label="Leading" value="71.81 pt" className="ml-1.5 w-[106px]" />
      </div>

      <div className="mt-[5px] flex h-[25px] items-center pr-2 pl-[5px]">
        <KerningIcon />
        <Combo label="Kerning" value="Metrics" className="ml-1 w-[113px]" />
        <div className="ml-auto">
          <TrackingIcon />
        </div>
        <Combo label="Tracking" value="0" className="ml-1 w-[106px]" />
      </div>

      <div className="mt-[5px] flex h-[25px] items-center pr-2 pl-[5px]">
        <VerticalScaleIcon />
        <div className="ml-1">
          <PlainField label="Vertical scale" value="100%" />
        </div>
        <div className="mr-1 ml-auto">
          <HorizontalScaleIcon />
        </div>
        <PlainField label="Horizontal scale" value="93%" />
      </div>

      <div className="mt-1 flex h-[30px] items-center pr-[7px] pl-[5px]">
        <BaselineIcon />
        <div className="ml-[5px]">
          <PlainField label="Baseline shift" value="0 pt" />
        </div>
        <label htmlFor="char-color" className="mr-[9px] ml-auto text-sm leading-5 text-[#cfcfcf]">Color:</label>
        <button id="char-color" className="h-[30px] w-[84px] border border-[#7c2a1c] bg-[#ee391d]" />
      </div>

      <div className="mt-2 flex justify-between pr-[23px] pl-5">
        {TYPE_STYLES.map((s) => (
          <button key={s.name} aria-label={s.name}>
            <StyleGlyph>
              <g fill="#e2e2e2" fontFamily={SERIF}>{s.icon}</g>
            </StyleGlyph>
          </button>
        ))}
      </div>
      <div className="mt-[14px] flex justify-between pr-[23px] pl-5">
        {OPEN_TYPE.map((s) => (
          <button key={s.name} aria-label={s.name}>
            <StyleGlyph>
              <g fill="#999" fontFamily={BOOK_SERIF}>{s.icon}</g>
            </StyleGlyph>
          </button>
        ))}
      </div>

      <div className="mt-[10px] flex items-center pl-1.5">
        <Select label="Language" options={["English: USA"]} className="w-[172px]" />
        <div className="ml-2">
          <AntiAliasIcon />
        </div>
        <Select label="Anti-aliasing" options={["Strong"]} className="ml-1 w-[101px]" />
      </div>
    </section>
  );
}

/* ---------- Task bar ---------- */

const APPS: { name: string; open: boolean; active?: boolean; icon: ReactNode }[] = [
  {
    name: "Chrome",
    open: true,
    icon: (
      <>
        <circle cx="14" cy="14" r="11.5" fill="#f6c631" />
        <path d="M14 14 4 8.3A11.5 11.5 0 0 1 24 8.3L14 8.5Z" fill="#e04a3f" />
        <path d="M4 8.3A11.5 11.5 0 0 0 12.5 25.4L18.5 16.5 9 16Z" fill="#2fa457" />
        <circle cx="14" cy="14" r="5.5" fill="#fff" />
        <circle cx="14" cy="14" r="4.4" fill="#4a8af4" />
      </>
    ),
  },
  {
    name: "File Explorer",
    open: true,
    icon: (
      <>
        <path d="M3 5H12L14 7H25V23H3Z" fill="#f5c33b" />
        <path d="M3 9H25V23H3Z" fill="#fee8a0" />
        <path d="M7 24V17Q7 15 9 15H19Q21 15 21 17V24H17V19H11V24Z" fill="#36a3e0" />
      </>
    ),
  },
  { name: "Photoshop", open: true, active: true, icon: null },
  { name: "Premiere Pro", open: true, icon: null },
  { name: "After Effects", open: false, icon: null },
  {
    name: "Slack",
    open: true,
    icon: (
      <>
        <circle cx="14" cy="14" r="11.5" fill="#f4f4f4" />
        <g strokeWidth="3" strokeLinecap="round">
          <path d="M7.5 11.5H12M12 7V7.2" stroke="#36c5f0" />
          <path d="M16.5 7.5V12M20.5 12V11.5" stroke="#2eb67d" />
          <path d="M16 16.5H20.5M16.5 20.5V20.3" stroke="#ecb22e" />
          <path d="M12 16V20.5M7.5 16.5H7.8" stroke="#e01e5a" />
        </g>
      </>
    ),
  },
  {
    name: "Word",
    open: true,
    icon: (
      <>
        <path d="M8 3H26V9H8Z" fill="#41a5ee" />
        <path d="M8 9H26V14H8Z" fill="#2b7cd3" />
        <path d="M8 14H26V20H8Z" fill="#185abd" />
        <path d="M8 20H26V25H8Z" fill="#103f91" />
        <path d="M2 8H17V22H2Z" fill="#1a56b4" />
        <text x="9.5" y="19" textAnchor="middle" fontSize="11" fontWeight="bold" fill="#fff">W</text>
      </>
    ),
  },
  {
    name: "Notepad",
    open: true,
    icon: (
      <>
        <path d="M11 3H24L20 24 4 21Z" fill="#7fbccb" />
        <path d="M11 3H23L20 8H9Z" fill="#d5eaf0" />
        <path d="M24 3 26 22 20 25Z" fill="#b9ae8c" />
        <path d="M4 21 20 24 19 26 4 23Z" fill="#e6f0f2" />
      </>
    ),
  },
  {
    name: "WinRAR",
    open: true,
    icon: (
      <>
        <path d="M2 3H26V9H2Z" fill="#d42a4c" />
        <path d="M2 10H26V17H2Z" fill="#5a4fb0" />
        <path d="M2 18H26V24H2Z" fill="#1d8c42" />
        <path d="M4 3V24" stroke="#efb63a" strokeWidth="1.5" />
        <path d="M11 3H17V24H11Z" fill="#e08a1e" />
        <path d="M10 12H18V17H10Z" fill="#e9e0cf" />
        <path d="M13 13H15V20H13Z" fill="#5b3a12" />
      </>
    ),
  },
  {
    name: "Control Panel",
    open: true,
    icon: (
      <>
        <path d="M3 6H25V22H3Z" fill="#52b4ea" />
        <path d="M4.5 7.5H23.5V20.5H4.5Z" fill="#8bd0f5" />
        <circle cx="10" cy="12" r="4" fill="#2b7cc0" />
        <path d="M10 12V8A4 4 0 0 1 14 12Z" fill="#fff" />
        <path d="M17 9H22M17 12H22M17 15H22" stroke="#fff" strokeWidth="1.5" />
        <path d="M7 18.5H14" stroke="#e8a33a" strokeWidth="1.5" />
        <path d="M14 18.5H21" stroke="#1c6ca8" strokeWidth="1.5" />
      </>
    ),
  },
  {
    name: "Chemistry",
    open: true,
    icon: (
      <>
        <path d="M9 3H16V9L21 22Q21 25 18 25H7Q4 25 4 22L9 9Z" fill="#f1ead8" />
        <path d="M9 11H16L19.5 22Q19 24 17 24H8Q5.5 24 5.5 22Z" fill="#f0a51e" />
        <path d="M12 17 14 19 11 21 14 23" stroke="#3f7a34" strokeWidth="1.5" />
        <circle cx="21" cy="8" r="5" fill="#eaf5fb" />
        <path d="M23 7A2 2 0 1 0 21 9Q23 9 23 6.5 23 10 20 11" stroke="#1e88b5" strokeWidth="1.4" />
      </>
    ),
  },
  {
    name: "Snipping Tool",
    open: true,
    icon: (
      <>
        <ellipse cx="12" cy="14" rx="10" ry="7" fill="#b08a90" />
        <ellipse cx="14" cy="10" rx="11" ry="6.5" fill="#f5f3f3" stroke="#c7404a" strokeWidth="1.3" transform="rotate(-14 14 10)" />
        <path d="M11 4 18 16M20 7 12 13" stroke="#8d8d8d" strokeWidth="1.4" />
        <ellipse cx="16" cy="21" rx="2" ry="3.5" stroke="#2a7fc4" strokeWidth="1.6" />
        <ellipse cx="22" cy="18" rx="3.5" ry="2" stroke="#2a7fc4" strokeWidth="1.6" />
      </>
    ),
  },
];

const ADOBE_BADGES: Record<string, { text: string; color: string; fill: string }> = {
  Photoshop: { text: "Ps", color: "#20b8e0", fill: "#051e2c" },
  "Premiere Pro": { text: "Pr", color: "#d279e6", fill: "#2a0634" },
  "After Effects": { text: "Ae", color: "#c495f5", fill: "#20053a" },
};

function TaskBar() {
  return (
    <footer className="flex h-[46px] shrink-0 items-stretch overflow-hidden bg-linear-to-r from-[#1a0b19] via-[#230f22] via-45% to-[#290708] text-white">
      <button aria-label="Start" className="flex w-[54px] items-center justify-center">
        <Svg w={24} h={24}>
          <path d="M0 3.5 10 2V11.5H0ZM11 2 24 0V11.5H11ZM0 12.5H10V22L0 20.5ZM11 12.5H24V24L11 22Z" fill="#fff" />
        </Svg>
      </button>
      <button aria-label="Cortana" className="flex w-[54px] items-center justify-center">
        <Svg w={24} h={24}>
          <circle cx="12" cy="12" r="10" stroke="#fff" strokeWidth="3" />
        </Svg>
      </button>
      <button aria-label="Task view" className="flex w-[54px] items-center justify-center">
        <Svg w={25} h={24}>
          <path d="M1 1V4H16V1M1 7.5H16V16.5H1ZM1 23V20H16V23M22 1V5M22 11V23" stroke="#fff" strokeWidth="1.5" />
          <rect x="20.5" y="7" width="3" height="3" fill="#fff" />
        </Svg>
      </button>
      <div className="ml-[3px] flex">
        {APPS.map((app) => {
          const badge = ADOBE_BADGES[app.name];
          return (
            <button key={app.name} aria-label={app.name} className="flex w-[57px] justify-center">
              <span className={`flex h-full w-[55px] flex-col items-center ${app.active ? "bg-[#483848]" : ""}`}>
                <span className="flex flex-1 items-center justify-center pt-px">
                  {badge ? <AdobeBadge {...badge} className="mb-0.5" /> : <Svg w={28} h={28}>{app.icon}</Svg>}
                </span>
                <span className={`h-[3px] ${app.active ? "w-full" : "w-[43px]"} ${app.open ? "bg-[#7db2e8]" : ""}`} />
              </span>
            </button>
          );
        })}
      </div>

      {/* Notification area */}
      <div className="ml-auto flex items-center text-[17px] leading-6">
        <Svg w={24} h={24}>
          <circle cx="15" cy="5" r="4" stroke="#fff" strokeWidth="1.8" />
          <circle cx="6" cy="13.5" r="4" stroke="#fff" strokeWidth="1.8" />
          <path d="M0 24Q1 18 6 18T12 24M12 11.5Q18 7 22 14" stroke="#fff" strokeWidth="1.8" />
        </Svg>
        <Svg w={18} h={10} className="ml-[23px]">
          <path d="M0 9.5 8 1 16 9.5" stroke="#fff" strokeWidth="1.5" />
        </Svg>
        <Svg w={24} h={17} className="ml-[14px]">
          <path d="M5 16A5 5 0 0 1 4 6.5 8 8 0 0 1 18 5.5 5.5 5.5 0 0 1 19 16Z" fill="#0e68c4" />
          <path d="M5 16Q0 16 .5 12L14 6Q24 8 23.5 12 23 16 19 16Z" fill="#2a9fe8" />
        </Svg>
        <Svg w={24} h={17} className="ml-3">
          <path d="M5 16A5 5 0 0 1 4 6.5 8 8 0 0 1 18 5.5 5.5 5.5 0 0 1 19 16Z" fill="#a29898" />
          <path d="M5 16Q0 16 .5 12L14 6Q24 8 23.5 12 23 16 19 16Z" fill="#f5f5f5" />
        </Svg>
        <Svg w={20} h={20} className="ml-[15px]">
          <path d="M1 19A18 18 0 0 1 19 1M5.5 19A13.5 13.5 0 0 1 19 6M10 19A9 9 0 0 1 19 11" stroke="#e8e0e0" strokeWidth="1.3" />
          <circle cx="17.5" cy="17.5" r="1.7" fill="#fff" />
        </Svg>
        <Svg w={23} h={20} className="ml-[13px]">
          <path d="M1 7H4L9 1.5V18.5L4 13H1ZM12 7Q14 10 12 13M15.5 4.5Q19 10 15.5 15.5M19 2Q24 10 19 18" stroke="#f0e8e8" strokeWidth="1.3" />
        </Svg>
        <Svg w={24} h={14} className="ml-[13px]">
          <rect x=".7" y=".7" width="21" height="12.5" stroke="#fff" strokeWidth="1.4" />
          <path d="M2.5 3H8V11H2.5ZM22 5H24V9H22Z" fill="#fff" />
        </Svg>
        <button className="ml-4 w-[59px] text-left">FRA</button>
        <time className="w-[98px]">2:37 PM</time>
        <button aria-label="Notifications">
          <Svg w={25} h={25}>
            <path d="M0 1H25V20H16L12 24.5 8 20H0Z" fill="#fff" />
            <path d="M5 6H20M5 10H20M5 14H14" stroke="#2a0a0a" strokeWidth="1.3" />
          </Svg>
        </button>
        <div className="ml-[30px] h-full w-0.5 bg-[#9c8484]" />
        <div className="w-1.5" />
      </div>
    </footer>
  );
}

export default function App() {
  return (
    <div className="flex h-screen flex-col overflow-hidden bg-[#535353] font-['Open_Sans','Noto_Sans',sans-serif]">
      <MenuBar />
      <OptionsBar />
      <div className="relative flex min-h-0 flex-1">
        <ToolBar />
        <DocumentWindow />
        <IconDock />
        <PanelDock />
        <LayersPanel />
        <CharacterPanel />
      </div>
      <TaskBar />
    </div>
  );
}
